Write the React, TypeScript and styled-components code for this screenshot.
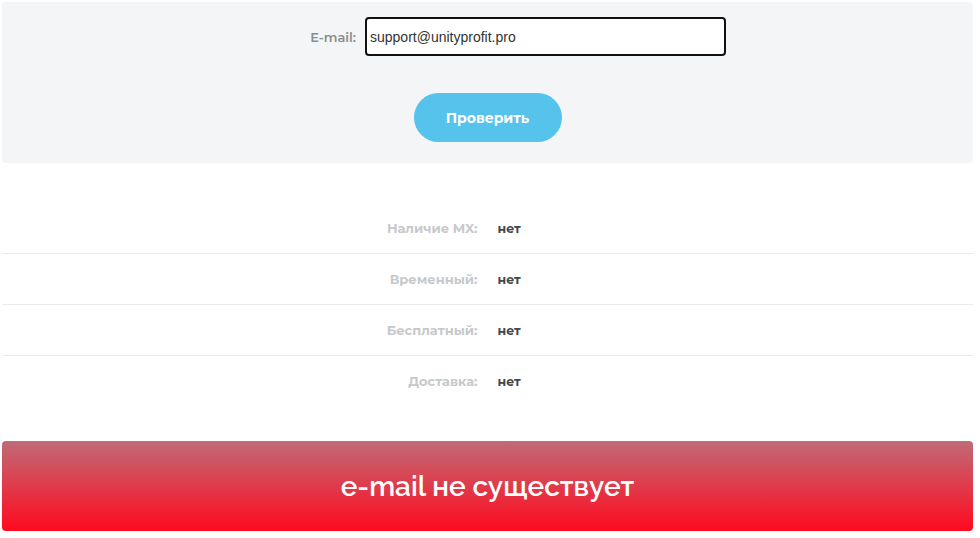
import React from 'react';
import styled, { createGlobalStyle } from 'styled-components';

const GlobalStyle = createGlobalStyle`
  html, body {
    margin: 0;
    padding: 0;
    background: #ffffff;
    font-family: "Montserrat", "Noto Sans", "Open Sans", sans-serif;
  }
`;

const Page = styled.div`
  width: 971px;
  padding: 2px 0 0 2px;
`;

const CheckPanel = styled.form`
  background: #f4f5f7;
  border-radius: 4px;
  padding: 15px 0 21px;
  display: flex;
  flex-direction: column;
  align-items: center;
`;

const FieldRow = styled.div`
  align-self: stretch;
  display: flex;
  align-items: center;
  padding-left: 300px;
  gap: 9px;
`;

const FieldLabel = styled.label`
  font-size: 13px;
  font-weight: 600;
  color: #8a8d90;
  width: 54px;
  text-align: right;
`;

const EmailInput = styled.input`
  box-sizing: border-box;
  width: 361px;
  height: 39px;
  border: 2px solid #111;
  border-radius: 4px;
  background: #fff;
  padding: 0 3px;
  font-family: "Liberation Sans", Arial, sans-serif;
  font-size: 14px;
  color: #333;
  outline: none;
`;

const CheckButton = styled.button`
  margin-top: 37px;
  width: 148px;
  height: 49px;
  border: none;
  border-radius: 25px;
  background: #55c3eb;
  color: #fff;
  font-family: inherit;
  font-size: 14px;
  font-weight: 700;
  cursor: pointer;
`;

const ResultList = styled.div`
  margin-top: 40px;
`;

const ResultRow = styled.div<{ last?: boolean }>`
  display: grid;
  grid-template-columns: 1fr 1fr;
  column-gap: 20px;
  align-items: center;
  height: 50px;
  border-bottom: ${p => (p.last ? 'none' : '1px solid #e9eaeb')};
`;

const ResultLabel = styled.span`
  text-align: right;
  font-size: 13px;
  font-weight: 700;
  color: #c6c9cc;
`;

const ResultValue = styled.span`
  font-size: 12.5px;
  font-weight: 700;
  color: #45484b;
`;

const StatusBanner = styled.div`
  margin-top: 35px;
  height: 90px;
  border-radius: 4px;
  background: linear-gradient(to bottom, #c06b77, #ff0a1e);
  display: flex;
  align-items: center;
  justify-content: center;
  color: #fff;
  font-family: "Raleway", "Noto Sans", "Open Sans", sans-serif;
  font-size: 28px;
  font-weight: 600;
`;

const results = [
  { label: 'Наличие MX:', value: 'нет' },
  { label: 'Временный:', value: 'нет' },
  { label: 'Бесплатный:', value: 'нет' },
  { label: 'Доставка:', value: 'нет' },
];

export default function App() {
  return (
    <>
      <GlobalStyle />
      <Page>
        <CheckPanel onSubmit={e => e.preventDefault()}>
          <FieldRow>
            <FieldLabel htmlFor="email">E-mail:</FieldLabel>
            <EmailInput id="email" type="text" defaultValue="support@unityprofit.pro" />
          </FieldRow>
          <CheckButton type="submit">Проверить</CheckButton>
        </CheckPanel>
        <ResultList>
          {results.map((r, i) => (
            <ResultRow key={r.label} last={i === results.length - 1}>
              <ResultLabel>{r.label}</ResultLabel>
              <ResultValue>{r.value}</ResultValue>
            </ResultRow>
          ))}
        </ResultList>
        <StatusBanner>e-mail не существует</StatusBanner>
      </Page>
    </>
  );
}
